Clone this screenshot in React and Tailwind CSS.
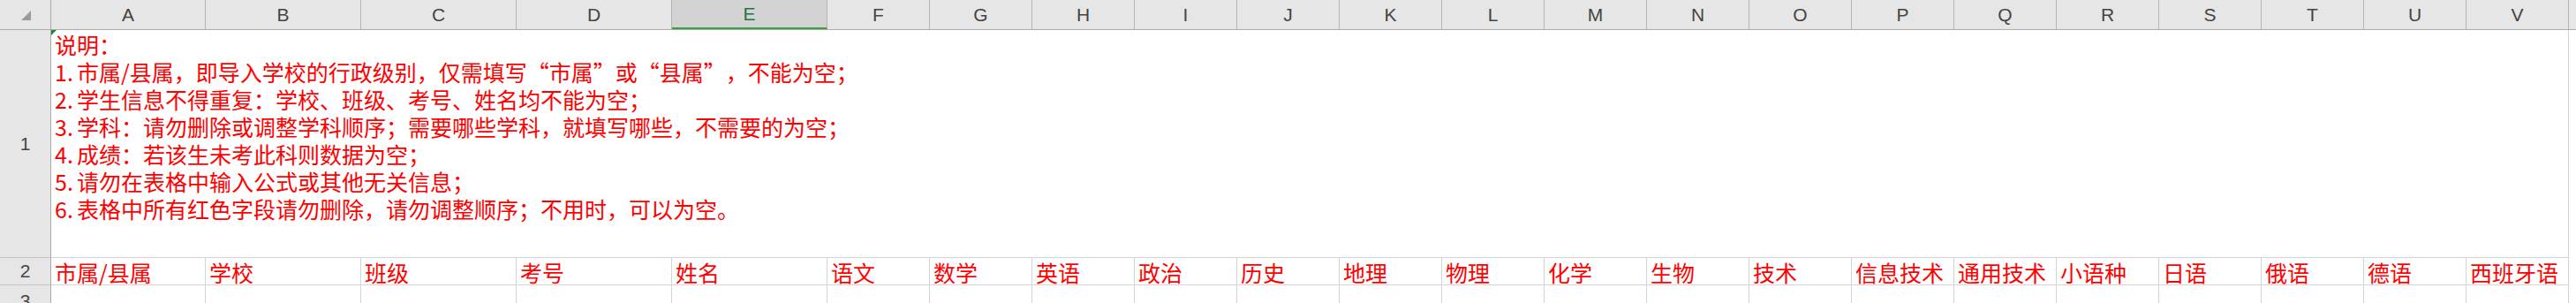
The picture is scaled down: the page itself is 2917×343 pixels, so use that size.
import React from 'react';

const cols = [
  { letter: 'A', w: 'w-[175px]', title: '市属/县属' },
  { letter: 'B', w: 'w-[176px]', title: '学校' },
  { letter: 'C', w: 'w-[176px]', title: '班级' },
  { letter: 'D', w: 'w-[176px]', title: '考号' },
  { letter: 'E', w: 'w-[176px]', title: '姓名', active: true },
  { letter: 'F', w: 'w-[116px]', title: '语文' },
  { letter: 'G', w: 'w-[116px]', title: '数学' },
  { letter: 'H', w: 'w-[116px]', title: '英语' },
  { letter: 'I', w: 'w-[116px]', title: '政治' },
  { letter: 'J', w: 'w-[116px]', title: '历史' },
  { letter: 'K', w: 'w-[116px]', title: '地理' },
  { letter: 'L', w: 'w-[116px]', title: '物理' },
  { letter: 'M', w: 'w-[116px]', title: '化学' },
  { letter: 'N', w: 'w-[116px]', title: '生物' },
  { letter: 'O', w: 'w-[116px]', title: '技术' },
  { letter: 'P', w: 'w-[116px]', title: '信息技术' },
  { letter: 'Q', w: 'w-[116px]', title: '通用技术' },
  { letter: 'R', w: 'w-[116px]', title: '小语种' },
  { letter: 'S', w: 'w-[116px]', title: '日语' },
  { letter: 'T', w: 'w-[116px]', title: '俄语' },
  { letter: 'U', w: 'w-[116px]', title: '德语' },
  { letter: 'V', w: 'w-[116px]', title: '西班牙语' },
];

const cjk = "font-['Noto_Sans_CJK_SC',sans-serif]";

// full-width quote marks, like the sheet's Song font draws them
const Lq = () => <span className="inline-block w-[25px] text-right">“</span>;
const Rq = () => <span className="inline-block w-[25px] text-left">”</span>;
const Num = ({ children }) => <span className="inline-block w-[25px]">{children}</span>;

function RowHead({ n, h }) {
  return (
    <div className={`w-[58px] shrink-0 ${h} bg-[#e6e6e6] border-r border-r-[#ababab] border-b border-b-[#c6c6c6] flex items-center justify-center text-[21px] text-[#444] font-['Liberation_Sans',sans-serif]`}>
      {n}
    </div>
  );
}

export default function App() {
  return (
    <div className="w-[2917px] h-[343px] overflow-hidden bg-white">
      {/* column headers */}
      <div className="flex h-[34px] bg-[#e6e6e6] border-b border-[#ababab] font-['Liberation_Sans',sans-serif] text-[21px] text-[#444]">
        <div className="w-[58px] shrink-0 border-r border-[#ababab] flex items-end justify-end pr-[22px] pb-[10px]">
          <svg width="11" height="11" viewBox="0 0 11 11">
            <polygon points="11,0 11,11 0,11" fill="#9a9a9a" />
          </svg>
        </div>
        {cols.map((c) => (
          <div
            key={c.letter}
            className={`${c.w} shrink-0 border-r border-[#b4b4b4] flex items-center justify-center ${
              c.active ? 'bg-[#d3d3d3] text-[#217346] border-b-2 border-b-[#3c9f48]' : ''
            }`}
          >
            {c.letter}
          </div>
        ))}
      </div>

      {/* row 1: merged note cell */}
      <div className="flex">
        <RowHead n="1" h="h-[258px]" />
        <div className={`relative w-[2851px] shrink-0 h-[258px] border-r border-b border-[#d4d4d4] pl-[4px] pt-[1px] text-[25px] leading-[31px] text-[#ff0000] ${cjk}`}>
          <svg className="absolute left-0 top-0" width="6" height="6" viewBox="0 0 6 6">
            <polygon points="0,0 6,0 0,6" fill="#1e8a2e" />
          </svg>
          <div className="whitespace-nowrap">说明：</div>
          <div className="whitespace-nowrap">
            <Num>1.</Num>市属/县属，即导入学校的行政级别，仅需填写<Lq />市属<Rq />或<Lq />县属<Rq />，不能为空；
          </div>
          <div className="whitespace-nowrap">
            <Num>2.</Num>学生信息不得重复：学校、班级、考号、姓名均不能为空；
          </div>
          <div className="whitespace-nowrap">
            <Num>3.</Num>学科：请勿删除或调整学科顺序；需要哪些学科，就填写哪些，不需要的为空；
          </div>
          <div className="whitespace-nowrap">
            <Num>4.</Num>成绩：若该生未考此科则数据为空；
          </div>
          <div className="whitespace-nowrap">
            <Num>5.</Num>请勿在表格中输入公式或其他无关信息；
          </div>
          <div className="whitespace-nowrap">
            <Num>6.</Num>表格中所有红色字段请勿删除，请勿调整顺序；不用时，可以为空。
          </div>
        </div>
      </div>

      {/* row 2: titles */}
      <div className="flex">
        <RowHead n="2" h="h-[31px]" />
        {cols.map((c) => (
          <div
            key={c.letter}
            className={`${c.w} shrink-0 h-[31px] border-r border-b border-[#d4d4d4] pl-[4px] pt-[3px] text-[25px] leading-[27px] text-[#ff0000] whitespace-nowrap ${cjk}`}
          >
            {c.title}
          </div>
        ))}
      </div>

      {/* row 3: empty */}
      <div className="flex">
        <div className="w-[58px] shrink-0 h-[31px] bg-[#e6e6e6] border-r border-[#ababab] flex items-start justify-center pt-[2px] text-[21px] text-[#444] font-['Liberation_Sans',sans-serif]">
          3
        </div>
        {cols.map((c) => (
          <div key={c.letter} className={`${c.w} shrink-0 h-[31px] border-r border-[#d4d4d4]`} />
        ))}
      </div>
    </div>
  );
}
